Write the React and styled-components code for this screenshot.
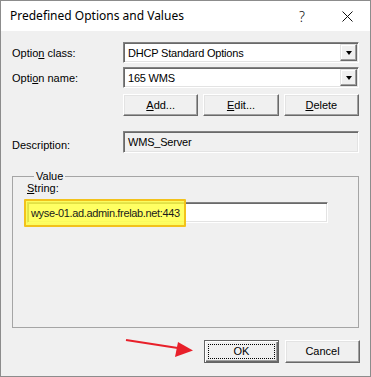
import styled, { createGlobalStyle } from "styled-components";

const GlobalStyle = createGlobalStyle`
  html, body {
    margin: 0;
    padding: 0;
    background: #ffffff;
  }
  * {
    box-sizing: border-box;
  }
`;

const Window = styled.div`
  position: relative;
  width: 371px;
  height: 377px;
  border: 1px solid #8c8c8c;
  background: #f0f0f0;
  display: flex;
  flex-direction: column;
  font-family: "Liberation Sans", Arial, sans-serif;
  font-size: 11px;
  color: #000;
`;

const TitleBar = styled.div`
  height: 30px;
  background: #ffffff;
  display: flex;
  align-items: center;
  padding-left: 9px;
`;

const Title = styled.div`
  flex: 1;
  font-family: "Noto Sans", "Segoe UI", sans-serif;
  font-size: 12px;
  color: #000;
  padding-bottom: 1px;
`;

const CaptionButton = styled.div`
  width: 46px;
  height: 30px;
  display: flex;
  align-items: center;
  justify-content: center;
  font-family: "Noto Sans", sans-serif;
  font-size: 14px;
  font-weight: 300;
  color: #111;
  padding-left: ${(p) => p.shift || 0}px;
`;

const Body = styled.div`
  flex: 1;
  display: flex;
  flex-direction: column;
  padding: 11px 11px 0 11px;
`;

const FieldRow = styled.div`
  display: grid;
  grid-template-columns: 111px 1fr;
  align-items: center;
  height: ${(p) => p.h || 21}px;
  margin-top: ${(p) => p.gap || 0}px;
`;

const Label = styled.div`
  padding-top: ${(p) => p.drop || 0}px;
  white-space: nowrap;
`;

const Key = styled.span`
  text-decoration: underline;
  text-underline-offset: 1px;
`;

const Sunken = styled.div`
  position: relative;
  height: 100%;
  border: 1px solid;
  border-color: #828282 #ffffff #ffffff #828282;
  box-shadow: inset 1px 1px 0 #696969, inset -1px -1px 0 #e3e3e3;
  background: ${(p) => (p.readOnly ? "#f0f0f0" : "#ffffff")};
  display: flex;
  align-items: center;
  padding-left: 4px;
  white-space: nowrap;
  letter-spacing: -0.2px;
`;

const DropButton = styled.div`
  position: absolute;
  top: 1px;
  right: 1px;
  bottom: 1px;
  width: 17px;
  background: #f0f0f0;
  border: 1px solid;
  border-color: #e3e3e3 #696969 #696969 #e3e3e3;
  box-shadow: inset -1px -1px 0 #a0a0a0, inset 1px 1px 0 #ffffff;
  display: flex;
  align-items: center;
  justify-content: center;

  &::after {
    content: "";
    border-left: 3.5px solid transparent;
    border-right: 3.5px solid transparent;
    border-top: 4px solid #000;
    margin-top: 1px;
  }
`;

const ActionRow = styled.div`
  display: grid;
  grid-template-columns: repeat(3, 1fr);
  gap: 5px;
  margin: 6px 0 0 111px;
  height: 22px;
`;

const Button = styled.div`
  position: relative;
  width: ${(p) => (p.w ? `${p.w}px` : "auto")};
  height: 100%;
  background: #f0f0f0;
  border: 1px solid;
  border-color: ${(p) =>
    p.primary ? "#646464" : "#ffffff #696969 #696969 #ffffff"};
  box-shadow: ${(p) =>
    p.primary
      ? "inset 1px 1px 0 #ffffff, inset -1px -1px 0 #696969, inset -2px -2px 0 #a0a0a0"
      : "inset -1px -1px 0 #a0a0a0, inset 1px 1px 0 #e3e3e3"};
  display: flex;
  align-items: center;
  justify-content: center;
  padding-bottom: 1px;

  &::after {
    content: "";
    display: ${(p) => (p.primary ? "block" : "none")};
    position: absolute;
    inset: 3px;
    border: 1px dotted #000;
  }
`;

const Group = styled.fieldset`
  margin: 17px 0 0 0;
  padding: 0 0 0 14px;
  width: 347px;
  height: 158px;
  border: 1px solid #a5a5a5;
  min-width: 0;
`;

const Legend = styled.legend`
  margin-left: 7px;
  padding: 0 2px;
  font-size: 11px;
  line-height: 13px;
`;

const StringLabel = styled.div`
  margin-top: -1px;
  height: 14px;
`;

const StringInput = styled.div`
  position: relative;
  margin-top: 6px;
  width: 301px;
  height: 21px;
  border: 1px solid;
  border-color: #828282 #ffffff #ffffff #828282;
  box-shadow: inset 1px 1px 0 #696969, inset -1px -1px 0 #e3e3e3;
  background: #ffffff;
  display: flex;
  align-items: center;
  padding-left: 3px;
  white-space: nowrap;
`;

const Highlight = styled.div`
  position: absolute;
  left: -4px;
  top: -4px;
  width: 162px;
  height: 28px;
  background: rgba(255, 255, 60, 0.8);
  border: 2px solid #f2c21b;
  border-radius: 1px;
`;

const InputText = styled.span`
  position: relative;
  color: #1a1a1a;
  letter-spacing: -0.35px;
`;

const Footer = styled.div`
  display: flex;
  justify-content: flex-end;
  gap: 6px;
  margin: 12px -1px 0 0;
  height: 23px;
`;

const ArrowLayer = styled.svg`
  position: absolute;
  left: 0;
  top: 0;
  pointer-events: none;
`;

export default function App() {
  return (
    <>
      <GlobalStyle />
      <Window>
        <TitleBar>
          <Title>Predefined Options and Values</Title>
          <CaptionButton shift={2}>?</CaptionButton>
          <CaptionButton>
            <svg width="11" height="11" viewBox="0 0 11 11">
              <path d="M0.5 0.5 L10.5 10.5 M10.5 0.5 L0.5 10.5" stroke="#111" strokeWidth="1" />
            </svg>
          </CaptionButton>
        </TitleBar>
        <Body>
          <FieldRow>
            <Label>
              Optio<Key>n</Key> class:
            </Label>
            <Sunken>
              DHCP Standard Options
              <DropButton />
            </Sunken>
          </FieldRow>
          <FieldRow gap={4}>
            <Label>
              Opti<Key>o</Key>n name:
            </Label>
            <Sunken>
              165 WMS
              <DropButton />
            </Sunken>
          </FieldRow>
          <ActionRow>
            <Button>
              <span>
                <Key>A</Key>dd...
              </span>
            </Button>
            <Button>
              <span>
                <Key>E</Key>dit...
              </span>
            </Button>
            <Button>
              <span>
                <Key>D</Key>elete
              </span>
            </Button>
          </ActionRow>
          <FieldRow h={22} gap={15}>
            <Label drop={5}>Description:</Label>
            <Sunken readOnly>WMS_Server</Sunken>
          </FieldRow>
          <Group>
            <Legend>Value</Legend>
            <StringLabel>
              <Key>S</Key>tring:
            </StringLabel>
            <StringInput>
              <Highlight />
              <InputText>wyse-01.ad.admin.frelab.net:443</InputText>
            </StringInput>
          </Group>
          <Footer>
            <Button primary w={75}>OK</Button>
            <Button w={75}>Cancel</Button>
          </Footer>
        </Body>
        <ArrowLayer width="371" height="377" viewBox="0 0 371 377">
          <line x1="125" y1="339" x2="180" y2="347.5" stroke="#e8202a" strokeWidth="2.2" />
          <polygon points="192,349.5 177,341 174,356" fill="#e8202a" />
        </ArrowLayer>
      </Window>
    </>
  );
}
